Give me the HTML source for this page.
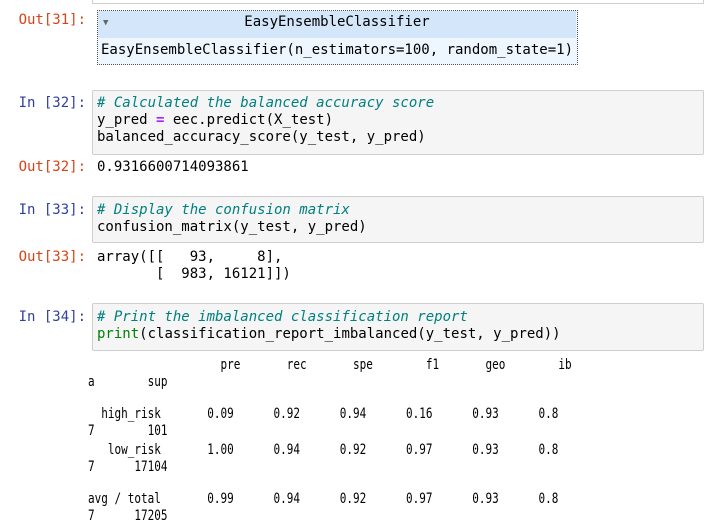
<!DOCTYPE html>
<html><head><style>
body{margin:0;width:712px;height:532px;background:#fff;position:relative;overflow:hidden;font-family:"DejaVu Sans Mono","Liberation Mono",monospace;font-size:14px;color:#000}
.a{position:absolute;white-space:pre;line-height:17px}
.pin{color:#303f9f;text-align:right;width:86px;left:0}
.pout{color:#d84315;text-align:right;width:86px;left:0}
.cell{position:absolute;left:92px;width:610px;background:#f5f5f5;border:1px solid #cfcfcf;border-radius:2px}
.c{color:#008080;font-style:italic}
.op{color:#aa22ff;font-weight:bold}
.g{color:#008000}
.r{position:absolute;left:88px;white-space:pre;font-size:12px;line-height:15px;transform:scale(0.917,1.2);transform-origin:0 0}
</style></head><body>
<div style="position:absolute;left:92px;top:-10px;width:610px;height:12px;border:1px solid #cfcfcf;background:#fff"></div>

<div class="a pout" style="top:12px">Out[31]:</div>
<div style="position:absolute;left:97px;top:10px;width:479px;height:53px;border:1px dotted #555;background:#eef6ff"></div>
<div style="position:absolute;left:98px;top:11px;width:478px;height:27px;background:#d4e6fa"></div>
<div class="a" style="left:103px;top:15px;font-size:9px;color:#666">▼</div>
<div class="a" style="left:98px;top:14px;width:478px;text-align:center">EasyEnsembleClassifier</div>
<div class="a" style="left:101px;top:42px">EasyEnsembleClassifier(n_estimators=100, random_state=1)</div>

<div class="a pin" style="top:95px">In [32]:</div>
<div class="cell" style="top:90px;height:63px"></div>
<div class="a" style="left:97px;top:95px"><span class="c"># Calculated the balanced accuracy score</span>
y_pred <span class="op">=</span> eec.predict(X_test)
balanced_accuracy_score(y_test, y_pred)</div>

<div class="a pout" style="top:159px">Out[32]:</div>
<div class="a" style="left:97px;top:159px">0.9316600714093861</div>

<div class="a pin" style="top:202px">In [33]:</div>
<div class="cell" style="top:196px;height:45px"></div>
<div class="a" style="left:97px;top:202px"><span class="c"># Display the confusion matrix</span>
confusion_matrix(y_test, y_pred)</div>

<div class="a pout" style="top:249px">Out[33]:</div>
<div class="a" style="left:97px;top:249px">array([[   93,     8],
       [  983, 16121]])</div>

<div class="a pin" style="top:309px">In [34]:</div>
<div class="cell" style="top:303px;height:46px"></div>
<div class="a" style="left:97px;top:309px"><span class="c"># Print the imbalanced classification report</span>
<span class="g">print</span>(classification_report_imbalanced(y_test, y_pred))</div>

<div class="r" style="top:356px">                    pre       rec       spe        f1       geo        ib</div>
<div class="r" style="top:373px">a        sup</div>
<div class="r" style="top:405px">  high_risk       0.09      0.92      0.94      0.16      0.93      0.8</div>
<div class="r" style="top:422px">7        101</div>
<div class="r" style="top:441px">   low_risk       1.00      0.94      0.92      0.97      0.93      0.8</div>
<div class="r" style="top:458px">7      17104</div>
<div class="r" style="top:490px">avg / total       0.99      0.94      0.92      0.97      0.93      0.8</div>
<div class="r" style="top:507px">7      17205</div>
</body></html>
